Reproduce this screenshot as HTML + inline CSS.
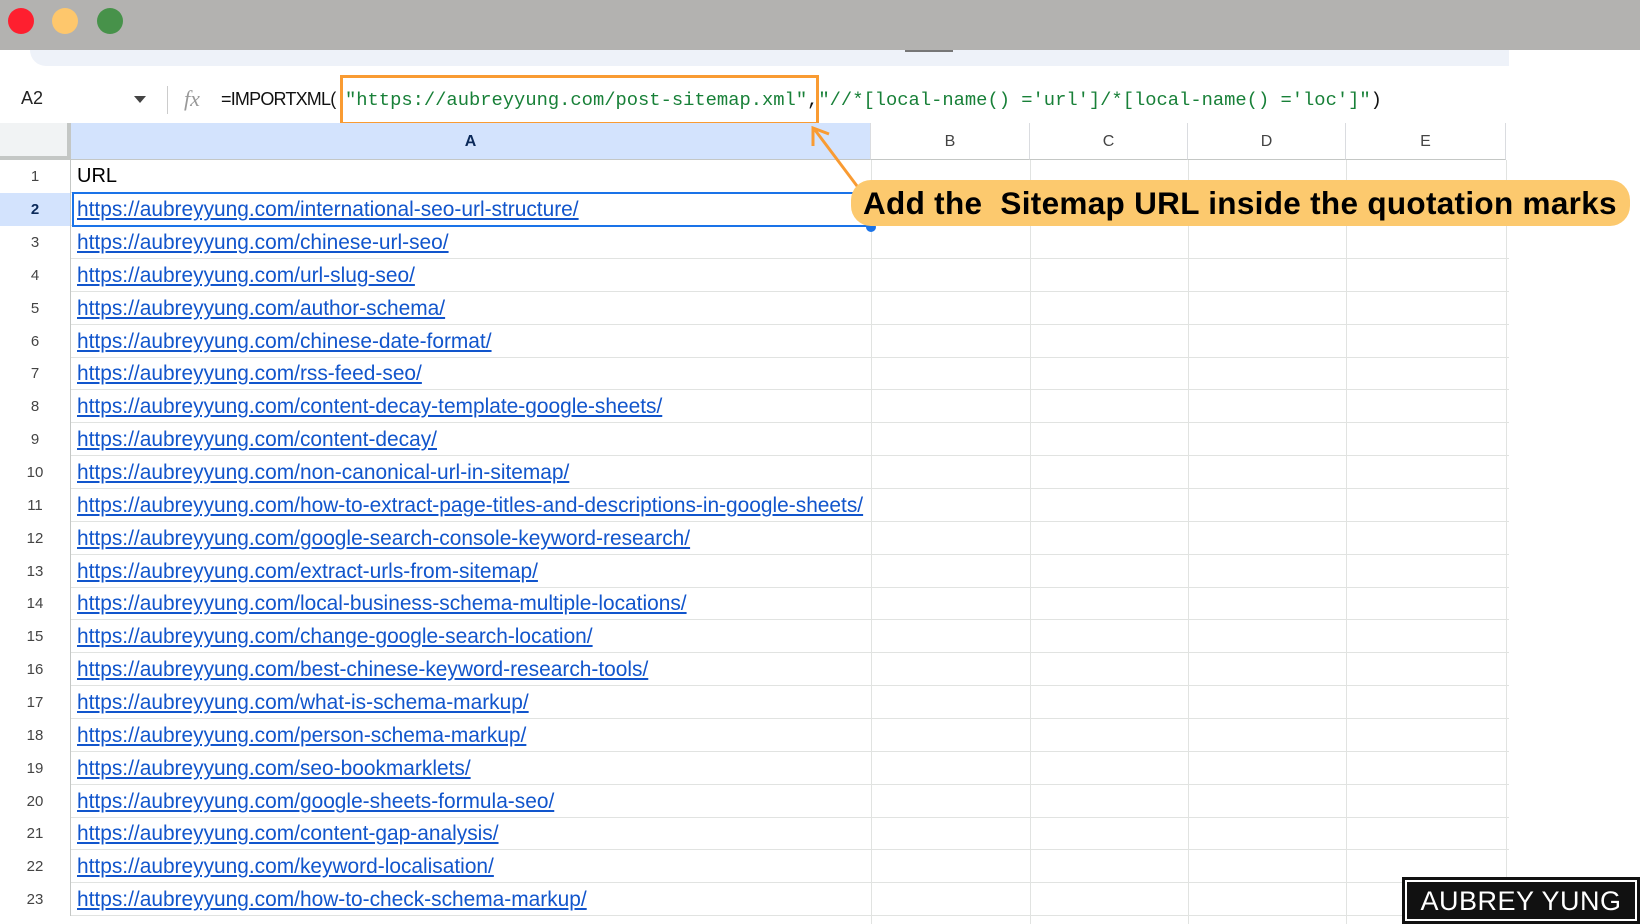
<!DOCTYPE html>
<html><head><meta charset="utf-8"><style>
*{margin:0;padding:0;box-sizing:border-box}
body{width:1640px;height:924px;overflow:hidden;background:#fff;font-family:"Liberation Sans",Arial,sans-serif;position:relative}
.top{position:absolute;left:0;top:0;width:1640px;height:50px;background:#b3b2b0}
.dot{position:absolute;top:8px;width:26px;height:26px;border-radius:50%}
.panel{position:absolute;left:30px;top:50px;width:1479px;height:16px;background:#eef2f9;border-radius:0 0 0 16px}
.abs{position:absolute}
.mono{font-family:"Liberation Mono",monospace;font-size:18.8px;color:#188038;white-space:pre}
.hdr{position:absolute;top:123px;height:37px;background:#fff;border-right:1px solid #dadce0;border-bottom:1px solid #c4c7c5;font-size:16px;color:#444;text-align:center;line-height:37px}
.row{position:absolute;left:0;width:1509px;height:33px;border-bottom:1px solid #e1e3e1}
.rn{position:absolute;left:0;top:0;width:71px;height:33px;border-right:1px solid #c4c7c5;font-size:15px;color:#444;text-align:center;line-height:33px;background:#fff}
.ca{position:absolute;left:77px;top:0;line-height:33px;font-size:20.9px;color:#1155cc;text-decoration:underline;white-space:nowrap}
.vl{position:absolute;top:160px;height:764px;width:1px;background:#e1e3e1}
</style></head><body>
<div class="top"></div>
<div class="dot" style="left:8px;background:#fe1f2f"></div>
<div class="dot" style="left:52px;background:#fec76c"></div>
<div class="dot" style="left:97px;background:#47924a"></div>
<div class="panel"></div>
<div class="abs" style="left:905px;top:50px;width:48px;height:2px;background:#777"></div>

<div class="abs" style="left:21px;top:88px;font-size:18px;color:#222">A2</div>
<div class="abs" style="left:134px;top:96px;width:0;height:0;border-left:6px solid transparent;border-right:6px solid transparent;border-top:7px solid #444"></div>
<div class="abs" style="left:167px;top:86px;width:1px;height:28px;background:#ccc"></div>
<div class="abs" style="left:184px;top:86px;font-family:'Liberation Serif',serif;font-style:italic;font-size:22px;color:#999">fx</div>
<div class="abs" style="left:221px;top:89px;font-size:18px;color:#111;letter-spacing:-0.8px">=IMPORTXML(</div>
<div class="abs mono" style="left:345px;top:89px">"https://aubreyyung.com/post-sitemap.xml"<span style="color:#111">,</span>"//*[local-name() ='url']/*[local-name() ='loc']"<span style="color:#111">)</span></div>
<div class="abs" style="left:340px;top:75px;width:479px;height:50px;border:3px solid #f99b32"></div>

<div class="hdr" style="left:0;width:71px;background:#f1f3f4;border-right:4px solid #c4c7c5;border-bottom:4px solid #c4c7c5"></div>
<div class="hdr" style="left:71px;width:800px;background:#d3e3fd;color:#0b2a5a;font-weight:bold">A</div>
<div class="hdr" style="left:871px;width:159px">B</div>
<div class="hdr" style="left:1030px;width:158px">C</div>
<div class="hdr" style="left:1188px;width:158px">D</div>
<div class="hdr" style="left:1346px;width:160px">E</div>

<div class="vl" style="left:871px"></div>
<div class="vl" style="left:1030px"></div>
<div class="vl" style="left:1188px"></div>
<div class="vl" style="left:1346px"></div>
<div class="vl" style="left:1506px"></div>

<div class="row" style="top:160px"><div class="rn">1</div><div class="ca" style="color:#000;text-decoration:none;font-size:20px">URL</div></div>
<div class="row" style="top:193px"><div class="rn" style="background:#d3e3fd;color:#0b2a5a;font-weight:bold">2</div><div class="ca">https://aubreyyung.com/international-seo-url-structure/</div></div>
<div class="row" style="top:226px"><div class="rn">3</div><div class="ca">https://aubreyyung.com/chinese-url-seo/</div></div>
<div class="row" style="top:259px"><div class="rn">4</div><div class="ca">https://aubreyyung.com/url-slug-seo/</div></div>
<div class="row" style="top:292px"><div class="rn">5</div><div class="ca">https://aubreyyung.com/author-schema/</div></div>
<div class="row" style="top:325px"><div class="rn">6</div><div class="ca">https://aubreyyung.com/chinese-date-format/</div></div>
<div class="row" style="top:357px"><div class="rn">7</div><div class="ca">https://aubreyyung.com/rss-feed-seo/</div></div>
<div class="row" style="top:390px"><div class="rn">8</div><div class="ca">https://aubreyyung.com/content-decay-template-google-sheets/</div></div>
<div class="row" style="top:423px"><div class="rn">9</div><div class="ca">https://aubreyyung.com/content-decay/</div></div>
<div class="row" style="top:456px"><div class="rn">10</div><div class="ca">https://aubreyyung.com/non-canonical-url-in-sitemap/</div></div>
<div class="row" style="top:489px"><div class="rn">11</div><div class="ca">https://aubreyyung.com/how-to-extract-page-titles-and-descriptions-in-google-sheets/</div></div>
<div class="row" style="top:522px"><div class="rn">12</div><div class="ca">https://aubreyyung.com/google-search-console-keyword-research/</div></div>
<div class="row" style="top:555px"><div class="rn">13</div><div class="ca">https://aubreyyung.com/extract-urls-from-sitemap/</div></div>
<div class="row" style="top:587px"><div class="rn">14</div><div class="ca">https://aubreyyung.com/local-business-schema-multiple-locations/</div></div>
<div class="row" style="top:620px"><div class="rn">15</div><div class="ca">https://aubreyyung.com/change-google-search-location/</div></div>
<div class="row" style="top:653px"><div class="rn">16</div><div class="ca">https://aubreyyung.com/best-chinese-keyword-research-tools/</div></div>
<div class="row" style="top:686px"><div class="rn">17</div><div class="ca">https://aubreyyung.com/what-is-schema-markup/</div></div>
<div class="row" style="top:719px"><div class="rn">18</div><div class="ca">https://aubreyyung.com/person-schema-markup/</div></div>
<div class="row" style="top:752px"><div class="rn">19</div><div class="ca">https://aubreyyung.com/seo-bookmarklets/</div></div>
<div class="row" style="top:785px"><div class="rn">20</div><div class="ca">https://aubreyyung.com/google-sheets-formula-seo/</div></div>
<div class="row" style="top:817px"><div class="rn">21</div><div class="ca">https://aubreyyung.com/content-gap-analysis/</div></div>
<div class="row" style="top:850px"><div class="rn">22</div><div class="ca">https://aubreyyung.com/keyword-localisation/</div></div>
<div class="row" style="top:883px"><div class="rn">23</div><div class="ca">https://aubreyyung.com/how-to-check-schema-markup/</div></div>

<div class="abs" style="left:72px;top:192px;width:800px;height:35px;border:2px solid #1a73e8"></div>
<div class="abs" style="left:866px;top:222px;width:10px;height:10px;border-radius:50%;background:#1a73e8"></div>

<svg class="abs" style="left:0;top:0" width="1640" height="924">
<line x1="863" y1="194" x2="815" y2="130" stroke="#f99b32" stroke-width="3"/>
<polyline points="813,146 813,128 829,134" fill="none" stroke="#f99b32" stroke-width="3"/>
</svg>
<div class="abs" style="left:851px;top:180px;width:779px;height:46px;background:#fcc96e;border-radius:20px;font-weight:bold;font-size:31.5px;letter-spacing:0.3px;line-height:46px;padding-left:12px;color:#000;white-space:nowrap">Add the&nbsp; Sitemap URL inside the quotation marks</div>

<div class="abs" style="left:1402px;top:877px;width:238px;height:47px;background:#111;padding:3px">
<div style="border:2px solid #fff;height:41px;color:#fff;font-size:27px;line-height:38px;text-align:center;letter-spacing:0.5px">AUBREY YUNG</div></div>
</body></html>
